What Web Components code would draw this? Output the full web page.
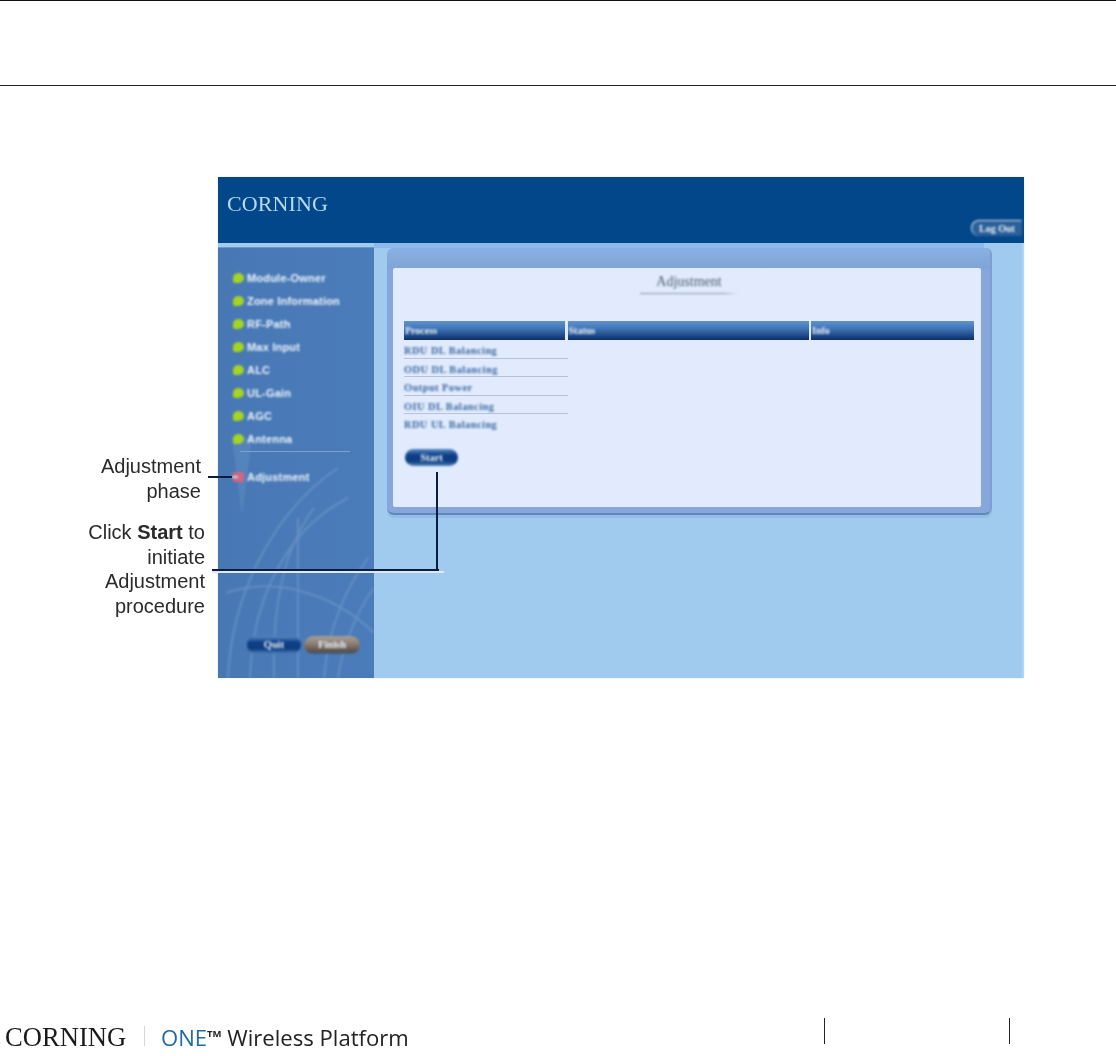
<!DOCTYPE html>
<html><head><meta charset="utf-8">
<style>html,body{margin:0;padding:0;background:#fff}</style>
</head><body>
<doc-page>
  <doc-header></doc-header>
  <doc-figure>
    <fig-labels slot="labels"></fig-labels>
    <ui-window slot="window"></ui-window>
  </doc-figure>
  <doc-footer slot="footer"></doc-footer>
</doc-page>
<script>
function def(name, css, html, init){
  customElements.define(name, class extends HTMLElement{
    constructor(){super();const s=this.attachShadow({mode:'open'});s.innerHTML='<style>'+css+'</style>'+html;}
    connectedCallback(){if(init)init(this)}
  });
}
const SANS='"Liberation Sans",Arial,sans-serif', SERIF='"Liberation Serif","Times New Roman",serif';

def('doc-page',`:host{display:flex;flex-direction:column;width:1116px;height:1056px;overflow:hidden;position:relative;font-family:${SANS}}
 .grow{flex:1}`,`<slot></slot><div class="grow"></div><slot name="footer"></slot>`);

def('doc-header',`:host{display:block;height:84px;border-top:1px solid #111;border-bottom:1px solid #222;margin-bottom:91px}`,``);

def('doc-figure',`:host{display:flex;align-items:flex-start;position:relative;height:502px}
 .leader{position:absolute;background:#0c1d3f}
 .lead1{left:208px;top:299px;width:24px;height:2px}
 .lead1s{left:232px;top:299px;width:6px;height:2px;background:#c5daf2;filter:blur(.8px)}
 .lead2h{left:212px;top:392px;width:227px;height:2px}
 .lead2s{left:212px;top:394px;width:232px;height:2px;background:#dbe8f6;filter:blur(.7px)}
 .lead2v{left:436px;top:295px;width:2px;height:99px}`,
 `<slot name="labels"></slot><slot name="window"></slot>
  <div class="leader lead1s"></div><div class="leader lead1"></div>
  <div class="leader lead2s"></div><div class="leader lead2h"></div><div class="leader lead2v"></div>`);

def('fig-labels',`:host{display:block;width:218px;box-sizing:border-box;padding-top:277px;text-align:right;font:20px/24.6px ${SANS};color:#2a2a2a;filter:blur(.7px)}
 .a{padding-right:17px;margin-bottom:17px}.b{padding-right:13px}`,
 `<div class="a">Adjustment<br>phase</div><div class="b">Click <b>Start</b> to<br>initiate<br>Adjustment<br>procedure</div>`);

def('ui-window',`:host{display:grid;width:806px;height:501px;grid-template-columns:156px 1fr;grid-template-rows:66px 1fr;background:#a0cbef;box-shadow:inset -2px 0 0 #aed6f8,0 0 2px #d9e6ee}
 .head{grid-column:1/3}`,
 `<win-head class="head"></win-head><side-nav class="side"></side-nav><main-area class="main"></main-area>`);

def('win-head',`:host{display:flex;align-items:flex-start;justify-content:space-between;background:#02478a;padding:14px 2px 0 9px;box-sizing:border-box;height:66px;position:relative}
 .logo{font:22px/26px ${SERIF};color:#b5d9ee;letter-spacing:.1px;filter:blur(.7px)}
 .out{margin-top:29px;width:51px;height:16px;border-radius:9px 2px 2px 9px;border:1px solid #d5e6f5;border-right:0;border-bottom:0;box-sizing:border-box;background:#2c6098;color:#eaf3fb;font:bold 10px/15px ${SERIF};text-align:center;filter:blur(.9px)}`,
 `<div class="logo">CORNING</div><div class="out">Log Out</div>`);

def('side-nav',`:host{display:flex;flex-direction:column;margin-top:4px;background:linear-gradient(90deg,#4878b4 0,#4b7cba 100%);position:relative;overflow:hidden;padding-top:19px;box-sizing:border-box;height:431px;border-top:1px solid #6e97c9;}
 .items{display:flex;flex-direction:column;position:relative}
 .sep{height:1px;margin:1px 24px 13px 22px;background:#7ea2ce;filter:blur(.4px)}
 .foot{position:absolute;left:29px;top:388px;display:flex;gap:3px}
 svg{position:absolute;left:0;top:0;filter:blur(1px)}`,
 `<svg width="156" height="431" viewBox="0 0 156 431" fill="none" stroke="#88abd6" stroke-width="2" opacity=".4">
   <path d="M14 190 L24 268 L34 190 Z" fill="#6d9ccb" stroke="none" opacity=".8"/>
   <path d="M10 430C14 340 60 260 120 220M32 430C34 350 70 280 130 250M56 430C54 360 66 300 96 260M80 430V270M106 430C110 380 128 340 150 310M120 430C124 400 140 360 156 340M8 345C50 330 110 340 156 385"/>
  </svg>
  <div class="items">
   <nav-item>Module-Owner</nav-item><nav-item>Zone Information</nav-item><nav-item>RF-Path</nav-item><nav-item>Max Input</nav-item><nav-item>ALC</nav-item><nav-item>UL-Gain</nav-item><nav-item>AGC</nav-item><nav-item>Antenna</nav-item>
   <div class="sep"></div>
   <nav-item data-active>Adjustment</nav-item>
  </div>
  <div class="foot"><pill-btn style="width:54px">Quit</pill-btn><pill-btn data-grey style="width:56px">Finish</pill-btn></div>`);

def('nav-item',`:host{display:flex;align-items:center;height:22.9px;padding-left:15px;gap:3px;font:bold 11px/14px ${SANS};letter-spacing:.2px;color:#eef5fd;filter:blur(.85px)}
 i{width:11px;height:10px;border-radius:50% 50% 50% 20%;background:#a6d421;flex:none}
 :host([data-active]) i{background:#d0667f;border-radius:1px}`,`<i></i><slot></slot>`);

def('pill-btn',`:host{display:block;height:18px;border-radius:9px;background:linear-gradient(#5a8bc4 0,#0e3f86 35%,#0d3c80 70%,#4f82bd 100%);color:#e9f2fb;font:bold 10.5px/18px ${SERIF};text-align:center;filter:blur(.9px)}
 :host([data-grey]){background:linear-gradient(#a99f96 0,#8a7d74 45%,#5e4f49 85%,#3a5f93 100%)}`,`<slot></slot>`);

def('main-area',`:host{display:block;padding:5px 32px 0 13px;box-sizing:border-box;height:435px;background:linear-gradient(#8fb9ea 0,#8fb9ea 5px,transparent 5px);background-size:610px 100%;background-repeat:no-repeat}
 .frame{height:267px;width:605px;box-sizing:border-box;background:linear-gradient(#8ab1e4 0,#7fa5d5 20px,#87a6dc 21px);border-radius:6px 6px 7px 7px;padding:20px 9px 6px 6px;border-bottom:2px solid #5f87b8;border-right:2px solid #7f9fd4;box-shadow:0 3px 0 #94bce6}
 .inner{background:#e1ebfd;height:100%;box-sizing:border-box;padding:0 0 0 11px;border-radius:2px;position:relative;display:flex;flex-direction:column}`,
 `<div class="frame"><div class="inner">
   <panel-title>Adjustment</panel-title>
   <proc-table></proc-table>
   <pill-btn style="width:53px;height:17px;margin-top:16px;margin-left:1px;line-height:17px">Start</pill-btn>
  </div></div>`);

def('panel-title',`:host{display:block;margin:6px 0 0 236px;width:98px;height:47px;box-sizing:border-box;text-align:center;font:14px/15px ${SERIF};color:#4c5a70;filter:blur(.8px)}
 hr{margin:4px 0 0;border:0;height:1px;background:linear-gradient(90deg,#8a97a8 85%,#e1ebfd)}`,`<slot></slot><hr>`);

def('proc-table',`:host{display:block;width:570px}
 .hd{display:grid;grid-template-columns:161px 241px 163px;gap:2.5px;height:18px;margin-bottom:1px}
 .hd div{background:linear-gradient(#5f93cf 0,#3f74b6 40%,#133a78 90%,#0f2f66 100%);color:#eef4fb;font:bold 10px/19px ${SERIF};padding-left:1px;}
 .hd span{filter:blur(.9px);display:inline-block}
 .rows{width:164px;margin-top:1px}
 .r{height:18.6px;box-sizing:border-box;border-bottom:1px solid #b6c3d6;font:bold 10.3px/22px ${SERIF};color:#3a659e;letter-spacing:.5px;white-space:nowrap}
 .r span{filter:blur(.8px);display:inline-block}
 .r:last-child{border:0}`,
 `<div class="hd"><div><span>Process</span></div><div><span>Status</span></div><div><span>Info</span></div></div>
  <div class="rows"><div class="r"><span>RDU DL Balancing</span></div><div class="r"><span>ODU DL Balancing</span></div><div class="r"><span>Output Power</span></div><div class="r"><span>OIU DL Balancing</span></div><div class="r"><span>RDU UL Balancing</span></div></div>`);

def('doc-footer',`:host{display:flex;align-items:flex-end;height:38px;box-sizing:border-box;position:relative;padding:0 0 6px 5px;color:#222}
 .c{font:26.6px/26px ${SERIF};color:#1a1a1a;width:139px;filter:blur(.3px)}
 .sep{width:1px;height:20px;background:#d8d8d8;margin:0 16px 4px 0}
 .w{font:22.1px/26px "Open Sans",${SANS};color:#222;white-space:nowrap;filter:blur(.3px)}
 .w b{font-weight:400;color:#1f6aa8}
 sup{font-size:9.5px;line-height:0;vertical-align:9px;font-weight:700}
 .t{position:absolute;top:0;width:1px;height:26px;background:#222}`,
 `<div class="c">CORNING</div><div class="sep"></div><div class="w"><b>ONE</b><sup>TM</sup> Wireless Platform</div>
  <div class="t" style="left:824px"></div><div class="t" style="left:1009px"></div>`);
</script>
</body></html>
